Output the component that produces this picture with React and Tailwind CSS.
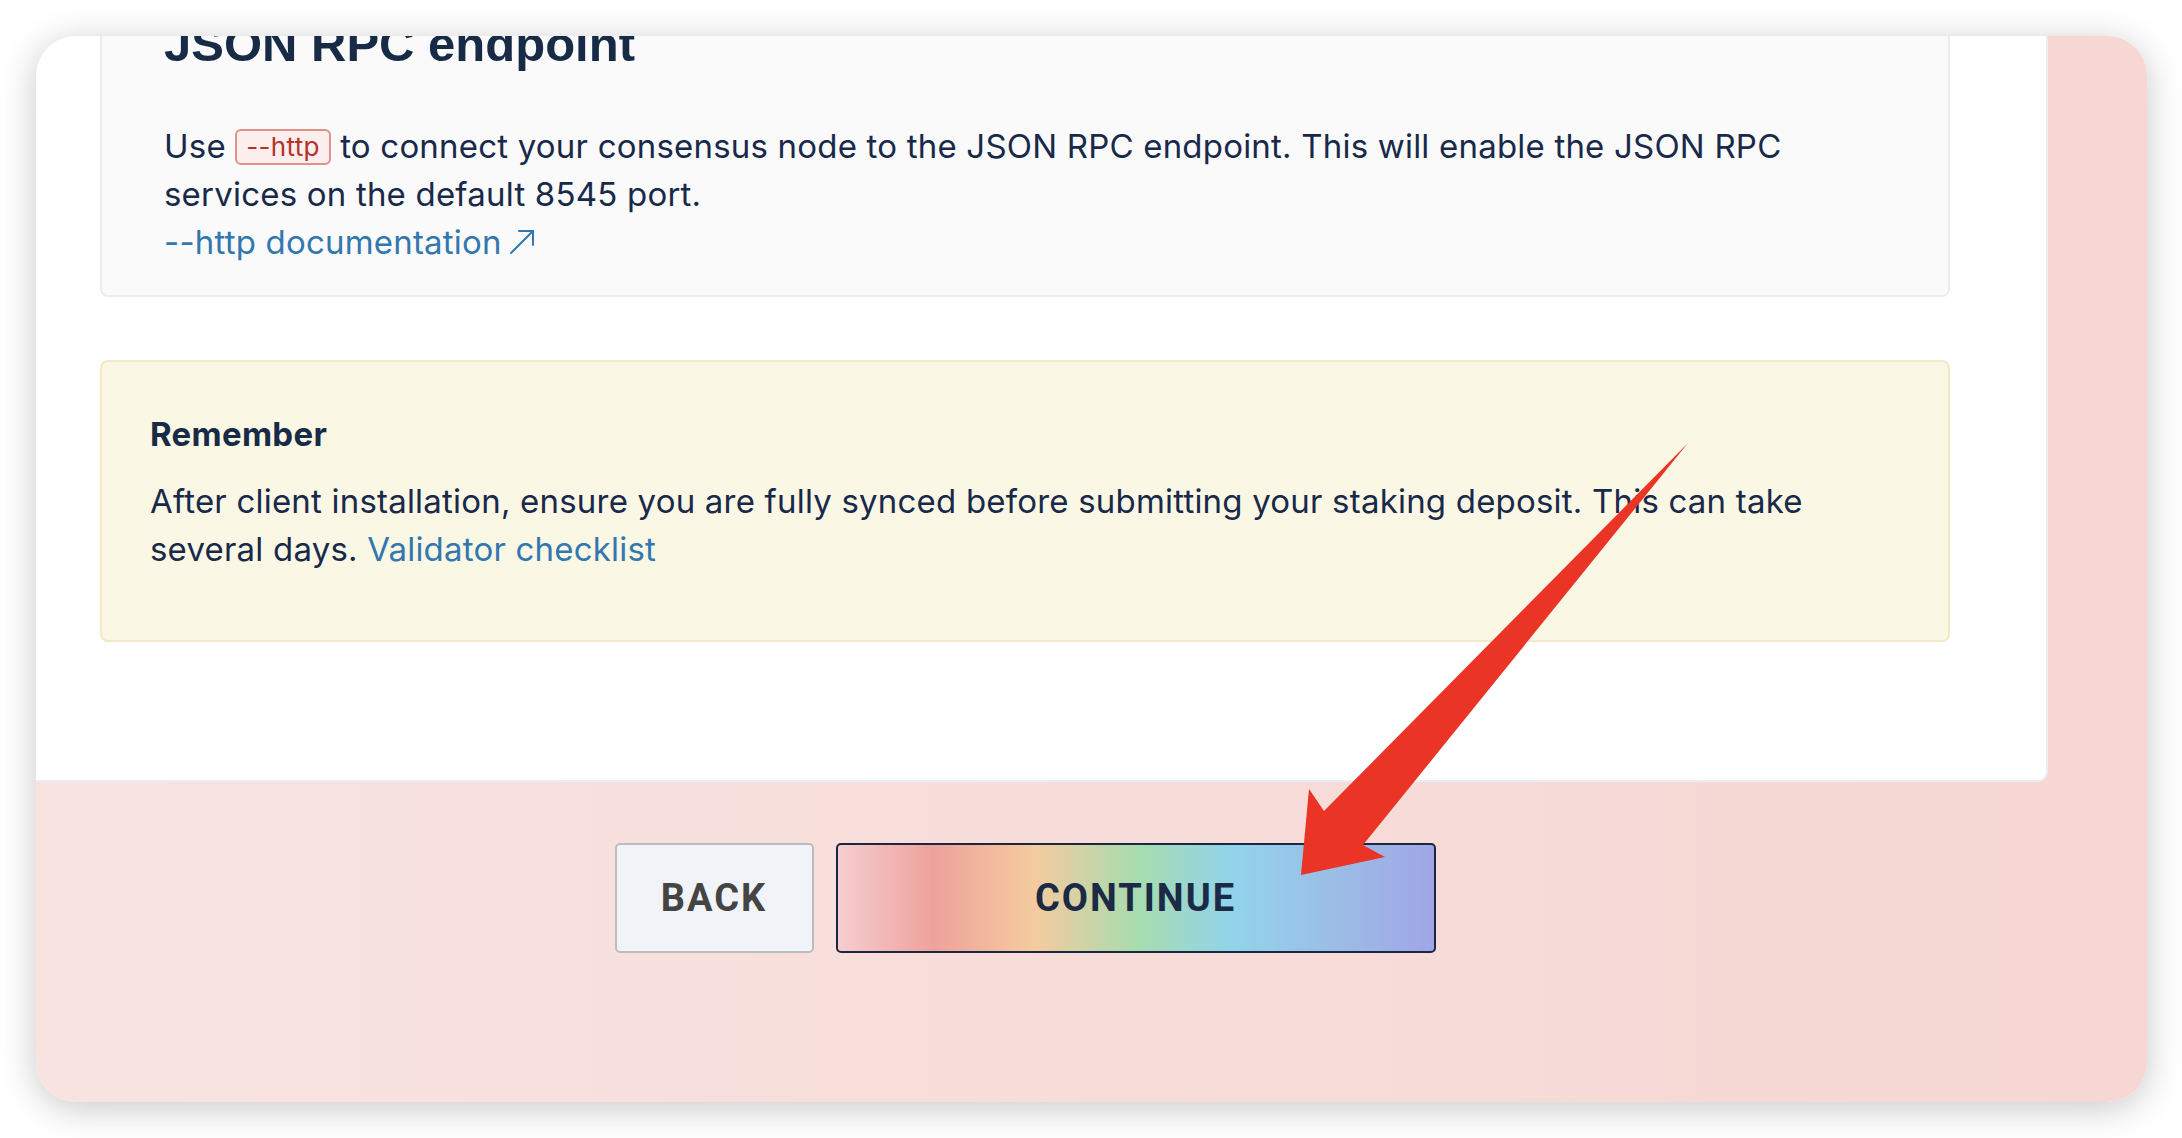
import React from "react";

function ExtArrow() {
  return (
    <svg width="28" height="28" viewBox="0 0 28 28" className="inline-block ml-[6px] -mt-[6px] align-middle" fill="none" stroke="#3277ae" strokeWidth="2" strokeLinecap="round" strokeLinejoin="round">
      <path d="M3 25 L25 3" />
      <path d="M11 3 H25 V17" />
    </svg>
  );
}

export default function App() {
  return (
    <div className="relative w-[2182px] h-[1138px] bg-white overflow-hidden" style={{ fontFamily: "Inter, 'Noto Sans', sans-serif" }}>
      <div className="pl-[36px] pt-[36px]">
        <div className="w-[2111px] h-[1066px] rounded-[40px] overflow-hidden shadow-[0_6px_36px_rgba(0,0,0,0.22)] bg-[linear-gradient(to_right,#f8e3e1,#f6d7d3)]">
          {/* white panel */}
          <div className="-mt-[136px] w-[2012px] bg-white rounded-br-[10px] border-r-2 border-b-2 border-[#eaedf4] pt-[40px] pl-[64px] pr-[96px] pb-[138px]">
            <div className="w-[1850px] bg-[#fafafa] border-2 border-[#ececec] rounded-[8px] pt-[73px] pl-[62px] pr-[62px] pb-[29px] text-[#19294a]">
              <h2 className="text-[49px] leading-[58px] font-bold text-[#172a46] mb-[49px]" style={{ fontFamily: "'Liberation Sans', Arial, sans-serif" }}>
                JSON RPC endpoint
              </h2>
              <p className="text-[33px] leading-[48px] tracking-[0.2px]">
                Use{" "}
                <code className="inline-block text-[26px] leading-[30px] px-[9px] py-[1px] rounded-[6px] border-2 border-[#e0918b] bg-[#fdeeee] text-[#b3322a] align-[2px] tracking-[0.3px]" style={{ fontFamily: "Inter, sans-serif" }}>
                  --http
                </code>{" "}
                to connect your consensus node to the JSON RPC endpoint. This will enable the JSON RPC services on the default 8545 port.
              </p>
              <div className="text-[33px] leading-[48px] tracking-[0.2px] text-[#3277ae]">
                --http documentation
                <ExtArrow />
              </div>
            </div>

            <div className="mt-[63px] w-[1850px] bg-[#fbf7e5] border-2 border-[#f4e8c6] rounded-[8px] pt-[48px] pl-[48px] pr-[48px] pb-[67px] text-[#19294a]">
              <div className="text-[33px] leading-[48px] font-bold text-[#172a46] mb-[19px] tracking-[0.3px]">Remember</div>
              <p className="text-[33px] leading-[48px] tracking-[0.2px]">
                After client installation, ensure you are fully synced before submitting your staking deposit. This can take several days.{" "}
                <span className="text-[#3277ae]">Validator checklist</span>
              </p>
            </div>
          </div>

          {/* buttons */}
          <div className="ml-[64px] w-[1850px] mt-[61px] flex justify-center gap-[22px]" style={{ fontFamily: "Roboto, 'Liberation Sans', sans-serif" }}>
            <button className="w-[199px] h-[110px] bg-[#f0f4f9] border-2 border-[#bcbcbc] rounded-[5px] text-[38px] font-bold tracking-[2px] text-[#444444]">
              BACK
            </button>
            <button className="w-[600px] h-[110px] border-2 border-[#1a2741] rounded-[5px] text-[38px] font-bold tracking-[2px] text-[#1b2a45] bg-[linear-gradient(to_right,#f5cdd0_0%,#eea29c_16%,#f5cb9f_33%,#a8dcae_50%,#91d4ea_66%,#9cbde6_83%,#a0a6e6_100%)]">
              CONTINUE
            </button>
          </div>
        </div>
      </div>

      {/* annotation arrow */}
      <svg className="absolute left-0 top-0 pointer-events-none" width="2182" height="1138" viewBox="0 0 2182 1138">
        <polygon points="1688,443 1363,845 1385,857 1301,875 1309,789 1324,811" fill="#e93426" />
      </svg>
    </div>
  );
}
